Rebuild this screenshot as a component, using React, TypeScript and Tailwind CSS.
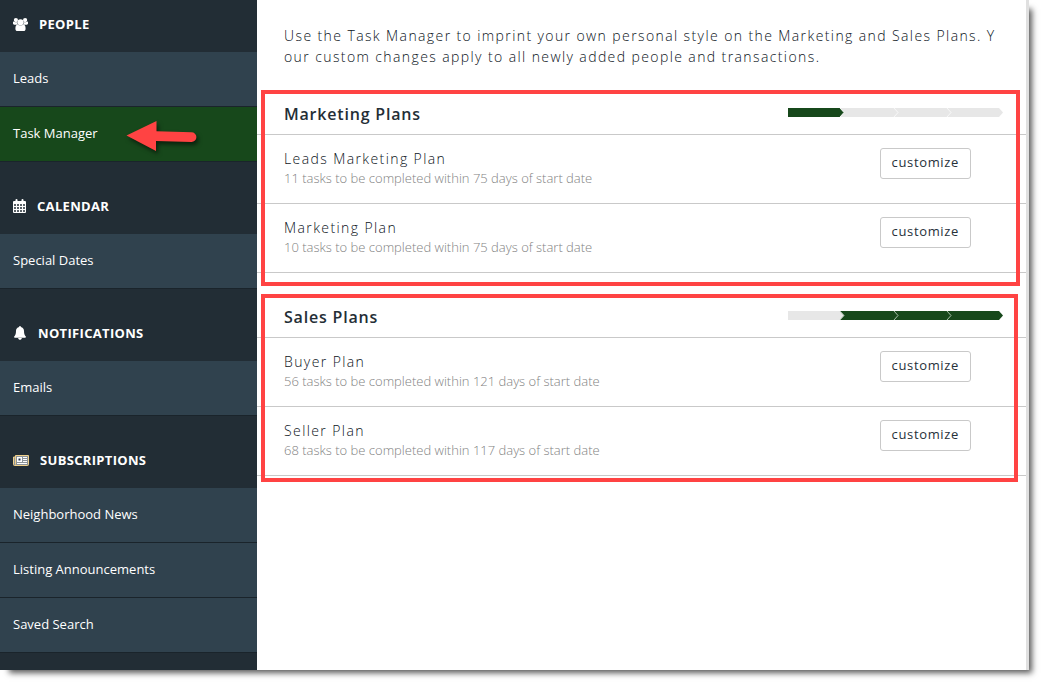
import type { ReactNode } from "react";

interface Plan {
  name: string;
  summary: string;
}

interface NavGroup {
  title: string;
  icon: ReactNode;
  items: string[];
}

function PeopleIcon() {
  return (
    <svg width="15" height="13" viewBox="0 0 15 13" fill="currentColor" aria-hidden="true">
      <circle cx="2.9" cy="2.1" r="2.1" />
      <circle cx="12.1" cy="2.1" r="2.1" />
      <path d="M0 4.2c0-.5.4-.8.8-.6 1.2.8 2.4.8 3.4.4-.1 1 .1 1.9.7 2.700H1.300C.5 6.700 0 6.300 0 5.600z" />
      <path d="M15 4.200c0-.5-.4-.8-.8-.6-1.200.8-2.400.8-3.400.4.1 1-.1 1.900-.7 2.700h3.600c.8 0 1.300-.4 1.300-1.100z" />
      <circle cx="7.5" cy="4.300" r="3.100" />
      <path d="M4.600 6.600c1.600 1.200 4.200 1.200 5.800 0 1.600.2 2.200 1.900 2.200 4.100 0 1.400-.8 2.300-2.100 2.300H4.500c-1.300 0-2.100-.9-2.100-2.300 0-2.200.6-3.900 2.200-4.100z" />
    </svg>
  );
}

function CalendarIcon() {
  return (
    <svg width="13" height="14" viewBox="0 0 13 14" aria-hidden="true">
      <path
        fill="currentColor"
        fillRule="evenodd"
        d="M1 2h1.500V1a1 1 0 0 1 2 0v1h4V1a1 1 0 0 1 2 0v1H12a1 1 0 0 1 1 1v10a1 1 0 0 1-1 1H1a1 1 0 0 1-1-1V3a1 1 0 0 1 1-1zM1 5v2h2V5zm3 0v2h2V5zm3 0v2h2V5zm3 0v2h2V5zM1 8v2h2V8zm3 0v2h2V8zm3 0v2h2V8zm3 0v2h2V8zM1 11v2h2v-2zm3 0v2h2v-2zm3 0v2h2v-2zm3 0v2h2v-2z"
      />
      <path fill="currentColor" fillOpacity="0.25" d="M1 5h11v8H1z" />
    </svg>
  );
}

function BellIcon() {
  return (
    <svg width="14" height="14" viewBox="0 0 14 14" fill="currentColor" aria-hidden="true">
      <path d="M7 0c.6 0 .9.400.8 1C9.900 1.400 11 3 11 5c0 3 .7 4.600 2 5.800 0 .5-.4.9-.9.900H1.900c-.5 0-.9-.4-.9-.9C2.300 9.600 3 8 3 5c0-2 1.100-3.600 3.200-4-.1-.6.2-1 .8-1z" />
      <path d="M5.200 12h3.600c0 1.100-.8 1.800-1.800 1.800S5.200 13.100 5.200 12z" />
    </svg>
  );
}

function NewspaperIcon() {
  return (
    <svg width="16" height="11" viewBox="0 0 16 11" fill="none" aria-hidden="true">
      <path d="M2.500.5h13v9a1 1 0 0 1-1 1h-13a1 1 0 0 1-1-1V2h2z" fill="#8d9398" stroke="#f0d08a" />
      <path d="M2.500 1.500V9.500" stroke="#f0d08a" />
      <path d="M4 2h5v5H4z" fill="#fff" />
      <path d="M5.500 3.500h2v2h-2z" fill="#26364f" />
      <path d="M10 2.500h4M10 4.500h4M10 6.500h4M4 8.500h10" stroke="#fff" />
    </svg>
  );
}

const navGroups: NavGroup[] = [
  { title: "PEOPLE", icon: <PeopleIcon />, items: ["Leads", "Task Manager"] },
  { title: "CALENDAR", icon: <CalendarIcon />, items: ["Special Dates"] },
  { title: "NOTIFICATIONS", icon: <BellIcon />, items: ["Emails"] },
  {
    title: "SUBSCRIPTIONS",
    icon: <NewspaperIcon />,
    items: ["Neighborhood News", "Listing Announcements", "Saved Search"],
  },
];

const marketingPlans: Plan[] = [
  { name: "Leads Marketing Plan", summary: "11 tasks to be completed within 75 days of start date" },
  { name: "Marketing Plan", summary: "10 tasks to be completed within 75 days of start date" },
];

const salesPlans: Plan[] = [
  { name: "Buyer Plan", summary: "56 tasks to be completed within 121 days of start date" },
  { name: "Seller Plan", summary: "68 tasks to be completed within 117 days of start date" },
];

function PointerArrow() {
  return (
    <svg
      className="absolute top-3 left-[125px] drop-shadow-[2px_3px_2px_rgba(0,0,0,0.55)]"
      width="76"
      height="36"
      viewBox="0 0 76 36"
      fill="#ff4343"
      aria-hidden="true"
    >
      <path d="M1.500 16.500 31.500 2v10.200l35 1a4.900 4.900 0 0 1 0 9.800l-35.500-1V32z" />
    </svg>
  );
}

function Sidebar() {
  return (
    <nav className="w-[257px] shrink-0 bg-[#222d35] text-white">
      {navGroups.map((group) => (
        <div key={group.title} className="group">
          <h2 className="flex items-center gap-[11px] px-[13px] pt-8 pb-4 text-[13px] leading-6 font-bold tracking-wide group-first:pt-3">
            {group.icon}
            {group.title}
          </h2>
          <ul>
            {group.items.map((item) => {
              const active = item === "Task Manager";
              return (
                <li key={item} className="relative">
                  <a
                    href="#"
                    aria-current={active ? "page" : undefined}
                    className={`block border-b border-[#1a242b] px-[13px] pt-4 pb-[18px] text-[13px] leading-5 ${
                      active ? "bg-[#17481b]" : "bg-[#30424e]"
                    }`}
                  >
                    {item}
                  </a>
                  {active && <PointerArrow />}
                </li>
              );
            })}
          </ul>
        </div>
      ))}
    </nav>
  );
}

function StageBar({ kind }: { kind: "marketing" | "sales" }) {
  const marketing = kind === "marketing";
  return (
    <svg className="mt-1.5 shrink-0" width="215" height="9" viewBox="0 0 215 9" aria-hidden="true">
      <path d="M0 0h211l4 4.500-4 4.500H0z" fill={marketing ? "#e7e7e7" : "#17481b"} />
      <path d="M0 0h52l4 4.500-4 4.500H0z" fill={marketing ? "#17481b" : "#e7e7e7"} />
      <path
        d="M52 0l4 4.500-4 4.500M106 0l4 4.500-4 4.500M159 0l4 4.500-4 4.500"
        fill="none"
        stroke={marketing ? "#f8f8f8" : "#a9bfab"}
      />
    </svg>
  );
}

interface PlanSectionProps {
  title: string;
  kind: "marketing" | "sales";
  plans: Plan[];
  frameClass: string;
}

function PlanSection({ title, kind, plans, frameClass }: PlanSectionProps) {
  return (
    <section className="relative">
      <div className="flex items-start justify-between border-b border-[#c9c9c9] pt-8 pr-[23px] pb-2 pl-[27px]">
        <h3 className="text-base leading-6 font-semibold tracking-wider text-[#242e36]">{title}</h3>
        <StageBar kind={kind} />
      </div>
      {plans.map((plan) => (
        <div
          key={plan.name}
          className="flex items-start justify-between border-b border-[#c9c9c9] pt-[13px] pr-[55px] pb-4 pl-[27px]"
        >
          <div>
            <p className="text-sm leading-[21px] font-light tracking-widest text-[#0c141b]">{plan.name}</p>
            <p className="text-[13px] leading-[18px] font-light text-[#828282]">{plan.summary}</p>
          </div>
          <button
            type="button"
            className="rounded-[3px] border border-[#c9c9c9] bg-white px-[11px] pt-[3px] pb-[5px] text-[13px] leading-[21px] tracking-wider"
          >
            customize
          </button>
        </div>
      ))}
      <div className={`pointer-events-none absolute border-4 border-[#ff4343] ${frameClass}`} />
    </section>
  );
}

export default function App() {
  return (
    <div className="min-h-screen bg-white pr-[15px] pb-[15px] font-['Open_Sans',sans-serif] text-[#27313a]">
      <div className="flex min-h-[calc(100vh-15px)] bg-white shadow-[6px_6px_6px_-3px_rgba(0,0,0,0.65)]">
        <Sidebar />
        <main className="min-w-0 flex-1 border-r-[3px] border-[#e0e0e0]">
          <p className="pt-[25px] pr-6 pb-[3px] pl-[27px] text-sm leading-[21px] font-light tracking-widest break-all text-[#0c141b]">
            Use the Task Manager to imprint your own personal style on the Marketing and Sales Plans. Your custom
            changes apply to all newly added people and transactions.
          </p>
          <PlanSection
            title="Marketing Plans"
            kind="marketing"
            plans={marketingPlans}
            frameClass="top-5 right-1.5 -bottom-[13px] left-1"
          />
          <PlanSection
            title="Sales Plans"
            kind="sales"
            plans={salesPlans}
            frameClass="top-[21px] right-2 -bottom-1.5 left-1"
          />
        </main>
      </div>
    </div>
  );
}
